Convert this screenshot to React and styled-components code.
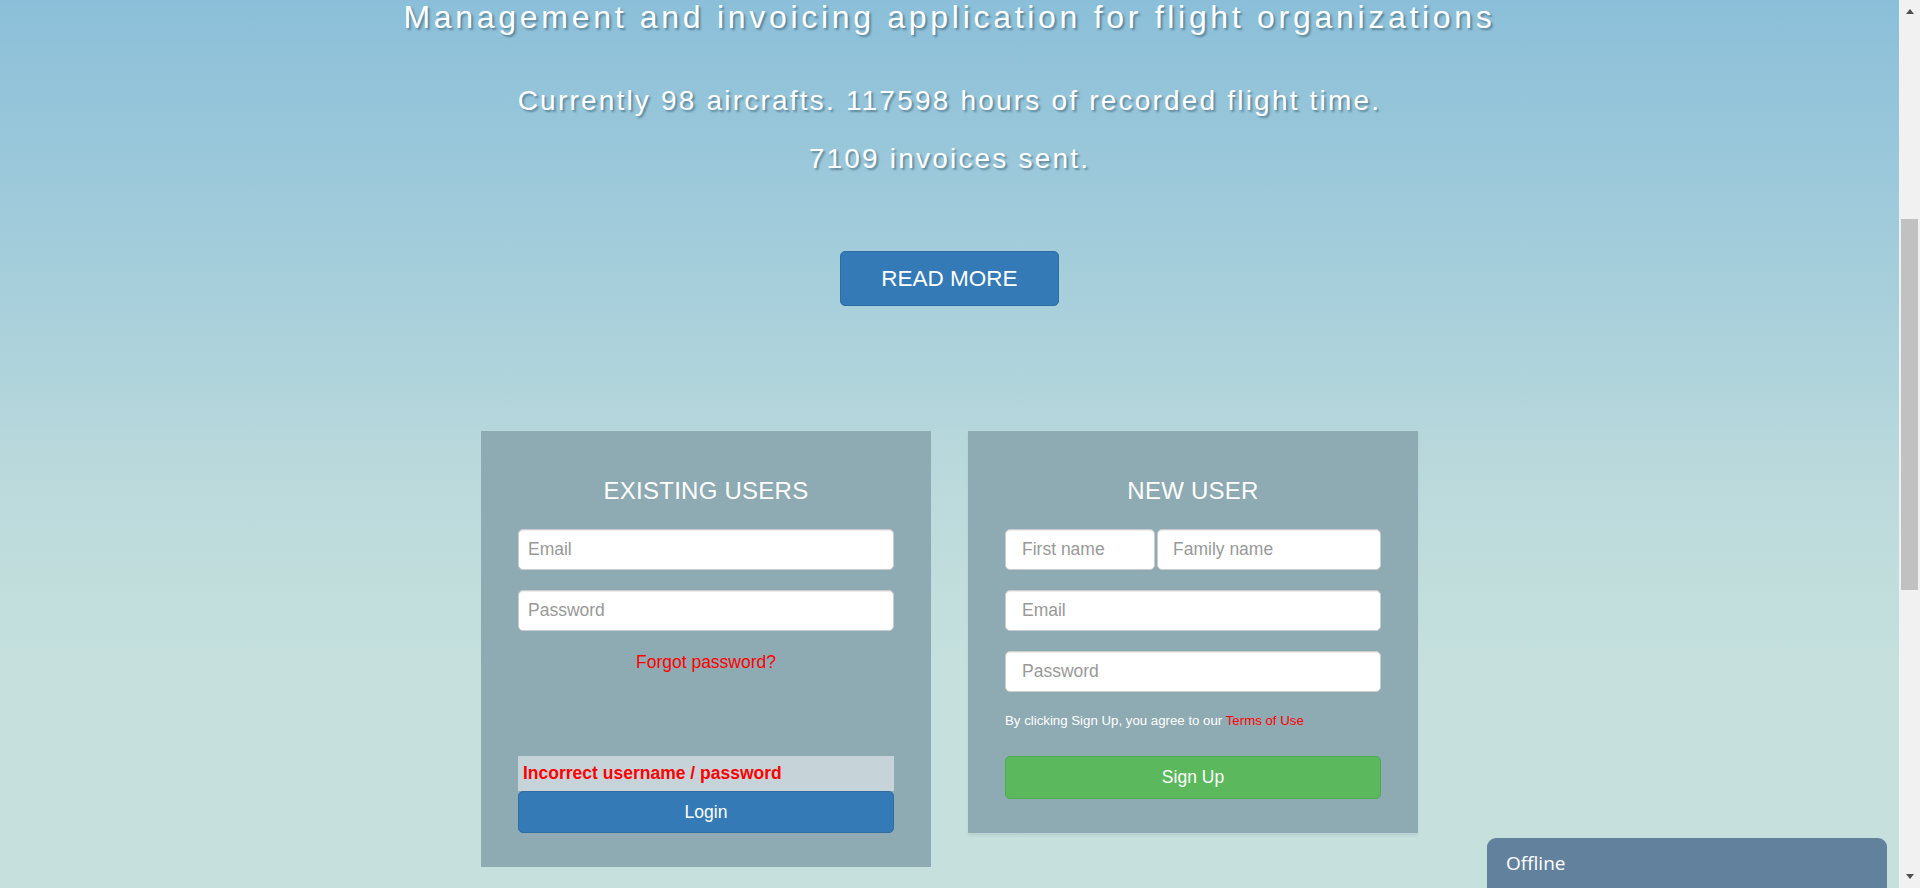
import React, { useLayoutEffect, useRef } from 'react';
import styled, { createGlobalStyle, css } from 'styled-components';

const GlobalStyle = createGlobalStyle`
  html, body {
    margin: 0;
    height: 100%;
    overflow: hidden;
  }
  body {
    font-family: "Liberation Sans", Arial, sans-serif;
  }
  * {
    box-sizing: border-box;
  }
`;

const Page = styled.div`
  display: flex;
  height: 100vh;
`;

const Viewport = styled.div`
  flex: 1;
  min-width: 0;
  overflow-y: scroll;
  scrollbar-width: none;
  background: linear-gradient(to bottom, #8bbfd9 0%, #a7cfdb 33%, #bcdadc 55%, #c5e0dd 75%, #c6e1dd 100%);
  &::-webkit-scrollbar {
    display: none;
  }
`;

/* classic window scrollbar, drawn beside the page */
const ScrollRail = styled.div`
  display: flex;
  flex-direction: column;
  width: 21px;
  flex-shrink: 0;
  background: #f1f1f1;
`;

const RailButton = styled.div`
  display: flex;
  justify-content: center;
  align-items: ${(p) => (p.$dir === 'up' ? 'flex-start' : 'flex-end')};
  height: 21px;
  padding: ${(p) => (p.$dir === 'up' ? '9px 0 0' : '0 0 9px')};
  &::before {
    content: '';
    width: 0;
    height: 0;
    border-left: 4.5px solid transparent;
    border-right: 4.5px solid transparent;
    ${(p) =>
      p.$dir === 'up'
        ? css`border-bottom: 5px solid #505050;`
        : css`border-top: 5px solid #505050;`}
  }
`;

const RailTrack = styled.div`
  flex: 1;
  padding: ${(p) => p.$offset}px 2px 0;
`;

const RailThumb = styled.div`
  height: ${(p) => p.$size}px;
  background: #c1c1c1;
`;

/* the top of the banner is scrolled out of view */
const Hero = styled.section`
  display: flex;
  flex-direction: column;
  align-items: center;
  padding-top: 473px;
  color: #fff;
  text-align: center;
  text-shadow: 2px 2px 2px rgba(40, 75, 95, 0.5);
`;

const Title = styled.h1`
  margin: 0;
  font-size: 32px;
  line-height: 36px;
  font-weight: normal;
  letter-spacing: 3.7px;
`;

const Stats = styled.p`
  margin: 37px 0 0;
  font-size: 28px;
  line-height: 58px;
  letter-spacing: 2.2px;
`;

const StatLine = styled.span`
  display: block;
`;

const ReadMore = styled.button`
  margin-top: 63px;
  height: 55px;
  padding: 0 40px;
  border: 1px solid #2e6da4;
  border-radius: 5px;
  background: #337ab7;
  color: #fff;
  font-family: inherit;
  font-size: 22.5px;
  line-height: 53px;
  text-shadow: none;
  cursor: pointer;
`;

const Panels = styled.div`
  display: flex;
  justify-content: center;
  align-items: flex-start;
  gap: 37px;
  margin-top: 125px;
  padding-bottom: 684px;
`;

const Panel = styled.div`
  display: flex;
  flex-direction: column;
  width: 450px;
  padding: 46px 37px 34px;
  background: #8eaab2;
  ${(p) =>
    p.$raised &&
    css`
      box-shadow: 0 3px 2px rgba(0, 0, 0, 0.06);
    `}
`;

const PanelTitle = styled.h2`
  margin: 0 0 24px;
  font-size: 24px;
  line-height: 28px;
  font-weight: normal;
  letter-spacing: 0.25px;
  color: #fff;
  text-align: center;
`;

const FieldStack = styled.div`
  display: flex;
  flex-direction: column;
  gap: 20px;
`;

const Field = styled.input`
  display: block;
  width: 100%;
  height: 41px;
  margin: 0;
  padding: 0 ${(p) => p.$pad || 9}px;
  border: 1px solid #ccc;
  border-radius: 5px;
  background: #fff;
  box-shadow: inset 0 1px 1px rgba(0, 0, 0, 0.075);
  font-family: inherit;
  font-size: 17.5px;
  color: #555;
  &::placeholder {
    color: #999;
  }
`;

const NameRow = styled.div`
  display: grid;
  grid-template-columns: 150px 1fr;
  gap: 2px;
`;

const ForgotLink = styled.a`
  display: block;
  margin-top: 19px;
  font-size: 17.5px;
  line-height: 25px;
  color: #f00;
  text-align: center;
  text-decoration: none;
`;

const ErrorBox = styled.div`
  margin-top: 81px;
  height: 35px;
  padding-left: 5px;
  background: #c6d4d9;
  color: #f00;
  font-size: 17.5px;
  font-weight: bold;
  line-height: 35px;
`;

const SubmitButton = styled.button`
  display: block;
  width: 100%;
  height: ${(p) => (p.$variant === 'success' ? 43 : 42)}px;
  border-radius: 5px;
  font-family: inherit;
  font-size: 17.5px;
  color: #fff;
  cursor: pointer;
  ${(p) =>
    p.$variant === 'success'
      ? css`
          margin-top: 25px;
          background: #5cb85c;
          border: 1px solid #4cae4c;
        `
      : css`
          background: #337ab7;
          border: 1px solid #2e6da4;
        `}
`;

const Terms = styled.p`
  margin: 20px 0 0;
  font-size: 13.25px;
  line-height: 18.75px;
  color: #fff;
`;

const TermsLink = styled.a`
  color: #f00;
  text-decoration: none;
`;

const ChatTab = styled.div`
  position: fixed;
  right: 33px;
  bottom: 0;
  width: 400px;
  height: 50px;
  padding: 13px 0 0 19px;
  border-radius: 9px 9px 0 0;
  background: #62819c;
  color: #fff;
  font-family: "Open Sans", sans-serif;
  font-size: 19px;
  line-height: 24px;
`;

export default function App() {
  const viewport = useRef(null);

  useLayoutEffect(() => {
    if (viewport.current) viewport.current.scrollTop = 474;
  }, []);

  return (
    <>
      <GlobalStyle />
      <Page>
        <Viewport ref={viewport}>
          <Hero>
            <Title>Management and invoicing application for flight organizations</Title>
            <Stats>
              <StatLine>Currently 98 aircrafts. 117598 hours of recorded flight time.</StatLine>
              <StatLine>7109 invoices sent.</StatLine>
            </Stats>
            <ReadMore>READ MORE</ReadMore>
          </Hero>

          <Panels>
            <Panel>
              <PanelTitle>EXISTING USERS</PanelTitle>
              <FieldStack>
                <Field type="email" placeholder="Email" />
                <Field type="password" placeholder="Password" />
              </FieldStack>
              <ForgotLink href="#">Forgot password?</ForgotLink>
              <ErrorBox>Incorrect username / password</ErrorBox>
              <SubmitButton>Login</SubmitButton>
            </Panel>

            <Panel $raised>
              <PanelTitle>NEW USER</PanelTitle>
              <FieldStack>
                <NameRow>
                  <Field $pad={16} placeholder="First name" />
                  <Field $pad={15} placeholder="Family name" />
                </NameRow>
                <Field $pad={16} type="email" placeholder="Email" />
                <Field $pad={16} type="password" placeholder="Password" />
              </FieldStack>
              <Terms>
                By clicking Sign Up, you agree to our <TermsLink href="#">Terms of Use</TermsLink>
              </Terms>
              <SubmitButton $variant="success">Sign Up</SubmitButton>
            </Panel>
          </Panels>

          <ChatTab>Offline</ChatTab>
        </Viewport>

        <ScrollRail>
          <RailButton $dir="up" />
          <RailTrack $offset={198}>
            <RailThumb $size={371} />
          </RailTrack>
          <RailButton $dir="down" />
        </ScrollRail>
      </Page>
    </>
  );
}
